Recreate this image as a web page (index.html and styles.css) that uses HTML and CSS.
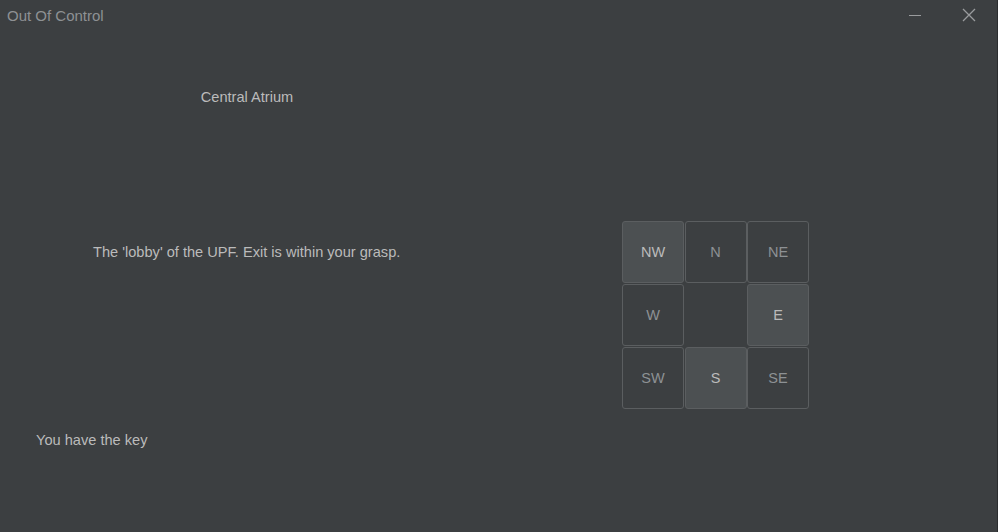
FILE: index.html
```html
<!DOCTYPE html>
<html>
<head>
<meta charset="utf-8">
<link rel="stylesheet" href="styles.css">
</head>
<body>
<div class="window">
  <div class="titlebar">
    <span class="title">Out Of Control</span>
    <div class="controls">
      <span class="ctl min"><svg width="14" height="14" viewBox="0 0 14 14"><line x1="1" y1="7.5" x2="13" y2="7.5" stroke="#9a9c9e" stroke-width="1"/></svg></span>
      <span class="ctl close"><svg width="16" height="16" viewBox="0 0 16 16"><path d="M2 2L14 14M14 2L2 14" stroke="#9a9c9e" stroke-width="1.3"/></svg></span>
    </div>
  </div>
  <div class="content">
    <div class="left">
      <div class="room">Central Atrium</div>
      <div class="desc">The 'lobby' of the UPF. Exit is within your grasp.</div>
      <div class="key">You have the key</div>
    </div>
    <div class="right">
      <div class="compass">
        <div class="btn on">NW</div>
        <div class="btn">N</div>
        <div class="btn">NE</div>
        <div class="btn">W</div>
        <div class="blank"></div>
        <div class="btn on">E</div>
        <div class="btn">SW</div>
        <div class="btn on">S</div>
        <div class="btn">SE</div>
      </div>
    </div>
  </div>
  <div class="edge"></div>
</div>
</body>
</html>
```

FILE: styles.css
```css
html, body {
  margin: 0;
  padding: 0;
  background: #3c3f41;
  width: 998px;
  height: 532px;
  overflow: hidden;
  font-family: "Liberation Sans", Arial, sans-serif;
}
.window {
  position: relative;
  width: 998px;
  height: 532px;
  background: #3c3f41;
}
.titlebar {
  height: 31px;
  display: flex;
  align-items: center;
  justify-content: space-between;
}
.title {
  margin-left: 7px;
  margin-top: -1px;
  font-size: 15px;
  color: #8e9194;
}
.controls {
  display: flex;
  align-items: center;
  margin-right: 21px;
}
.ctl {
  display: flex;
  align-items: center;
  justify-content: center;
}
.min {
  margin-right: 39px;
  margin-top: -2px;
}
.close {
  margin-top: -1px;
}
.content {
  display: flex;
}
.left {
  width: 494px;
  display: flex;
  flex-direction: column;
  color: #bbbbbb;
  font-size: 14.6px;
}
.room {
  text-align: center;
  margin-top: 57px;
  line-height: 18px;
}
.desc {
  margin-top: 137px;
  margin-left: 93px;
  line-height: 18px;
}
.key {
  margin-top: 170px;
  margin-left: 36px;
  line-height: 18px;
}
.right {
  padding-left: 128px;
  padding-top: 190px;
}
.compass {
  display: grid;
  grid-template-columns: repeat(3, 62px);
  grid-template-rows: repeat(3, 62px);
  gap: 1px 0.5px;
}
.btn {
  box-sizing: border-box;
  border: 1px solid #5b5e60;
  border-radius: 3px;
  display: flex;
  align-items: center;
  justify-content: center;
  font-size: 14.5px;
  color: #8d9194;
  background: #3c3f41;
}
.btn.on {
  background: #4c5052;
  color: #bbbbbb;
}
.edge {
  position: absolute;
  right: 0;
  top: 0;
  width: 1px;
  height: 532px;
  background: #2b2d2f;
}
```
